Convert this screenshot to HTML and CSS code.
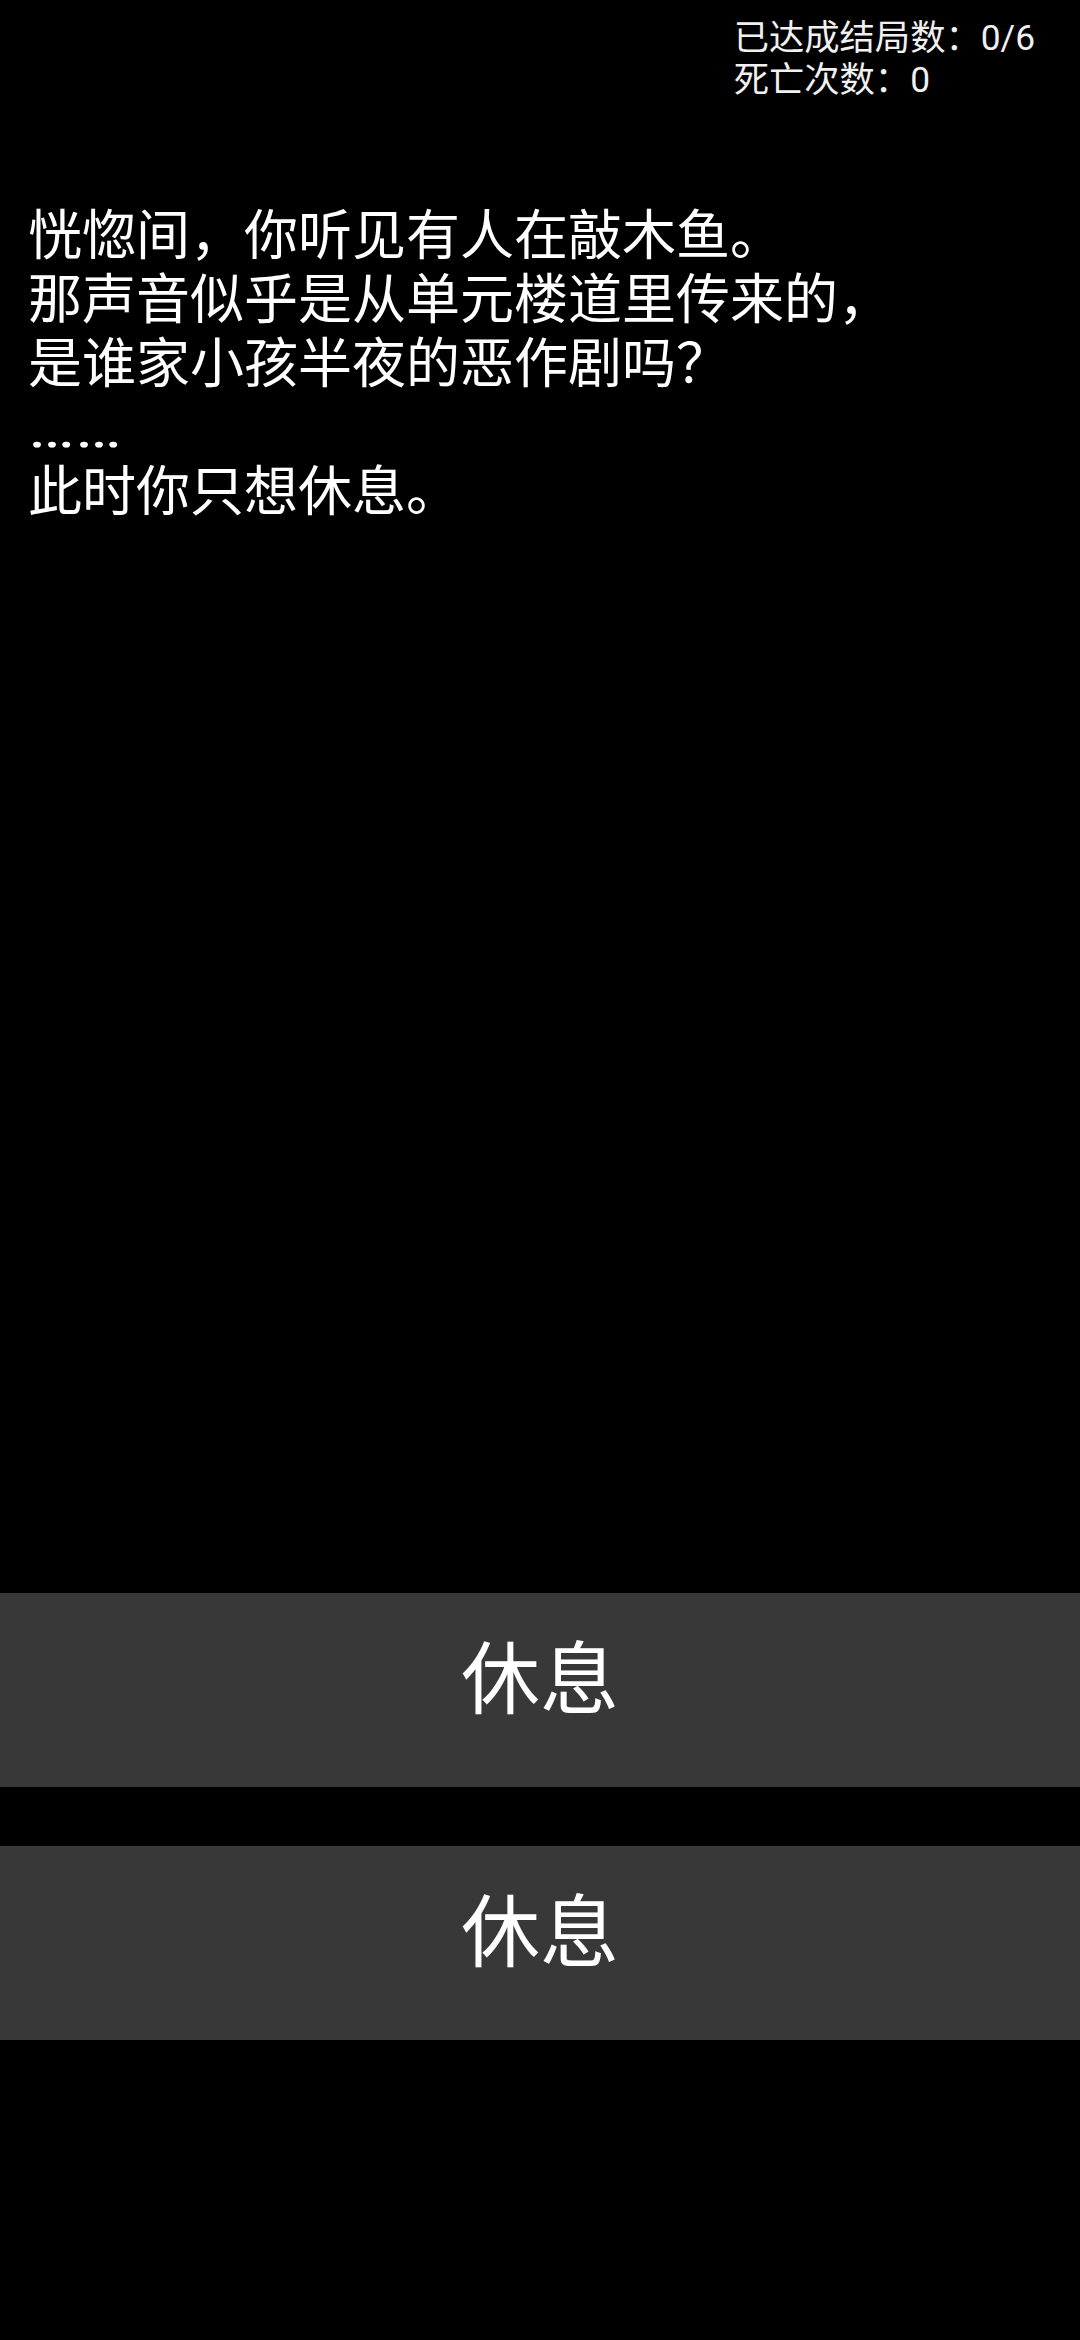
FILE: index.html
```html
<!DOCTYPE html>
<html lang="zh-CN">
<head>
<meta charset="utf-8">
<title>休息</title>
<link rel="stylesheet" href="styles.css">
</head>
<body>
<div class="screen">
  <div class="stats">
    <div class="stat">已达成结局数：0/6</div>
    <div class="stat">死亡次数：0</div>
  </div>
  <div class="story">
    <p class="line">恍惚间，你听见有人在敲木鱼。</p>
    <p class="line">那声音似乎是从单元楼道里传来的，</p>
    <p class="line">是谁家小孩半夜的恶作剧吗？</p>
    <p class="line"><span class="ellipsis">……</span></p>
    <p class="line">此时你只想休息。</p>
  </div>
  <div class="choices">
    <button class="choice">休息</button>
    <button class="choice">休息</button>
  </div>
</div>
</body>
</html>
```

FILE: styles.css
```css
html, body {
  margin: 0;
  padding: 0;
  background: #000;
}

body {
  font-family: Roboto, "Noto Sans CJK SC", sans-serif;
  color: #fff;
}

.screen {
  width: 1080px;
  height: 2340px;
  display: flex;
  flex-direction: column;
  background: #000;
}

.stats {
  align-self: flex-end;
  padding: 17px 45px 0 0;
  font-size: 35.3px;
  line-height: 42px;
  color: #f0f0f0;
}

.stat {
  white-space: nowrap;
}

.story {
  margin-top: 104px;
  padding-left: 28px;
  flex: 1;
}

.line {
  margin: 0;
  font-size: 54px;
  line-height: 64px;
  white-space: nowrap;
}

.ellipsis {
  display: inline-block;
  transform: scaleX(1.3);
  transform-origin: left center;
}

.choices {
  display: flex;
  flex-direction: column;
  gap: 59px;
  padding-bottom: 300px;
}

.choice {
  display: flex;
  align-items: center;
  justify-content: center;
  height: 194px;
  width: 100%;
  margin: 0;
  padding: 0 0 18px 0;
  border: none;
  background: #383838;
  color: #fff;
  font-family: Roboto, "Noto Sans CJK SC", sans-serif;
  font-size: 79px;
  line-height: 1;
}
```
